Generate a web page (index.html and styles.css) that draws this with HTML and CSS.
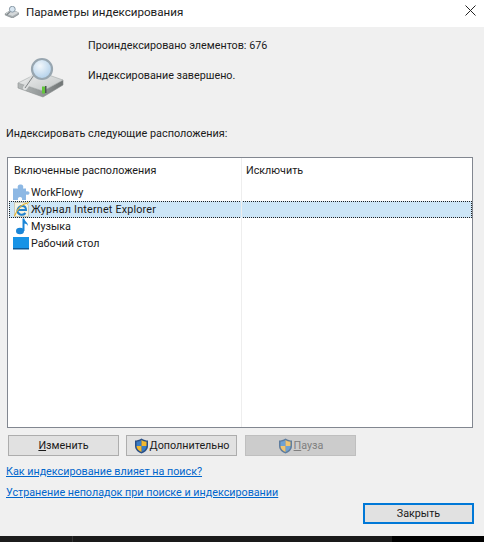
FILE: index.html
```html
<!DOCTYPE html>
<html lang="ru">
<head>
<meta charset="utf-8">
<title>Параметры индексирования</title>
<link rel="stylesheet" href="styles.css">
</head>
<body>
<div class="window">
  <header class="titlebar">
    <svg class="title-icon" width="16" height="12" viewBox="0 0 50 41">
      <path d="M2 26L24 13l23 10v6L27 41 2 31z" fill="#a9afb2" stroke="#6f777b" stroke-width="2"/>
      <path d="M2 26l25 8 20-11L24 13z" fill="#d4d8da"/>
      <path d="M19 19L7 30" stroke="#7b8286" stroke-width="4"/>
      <circle cx="26" cy="11" r="10" fill="#d8e6f1" stroke="#7f8f9c" stroke-width="3"/>
    </svg>
    <span class="title-text">Параметры индексирования</span>
    <svg class="close-icon" width="11" height="11" viewBox="0 0 11 11">
      <path d="M.5.5l10 10M10.500.5l-10 10" stroke="#222" stroke-width="1" fill="none"/>
    </svg>
  </header>
  <main class="content">
    <section class="status">
      <svg class="status-icon" width="50" height="41" viewBox="0 0 50 41">
        <defs>
          <linearGradient id="disk" x1="0" y1="0" x2="1" y2="1">
            <stop offset="0" stop-color="#f2f3f3"/><stop offset="1" stop-color="#bfc3c3"/>
          </linearGradient>
          <linearGradient id="side" x1="0" y1="0" x2="1" y2="0">
            <stop offset="0" stop-color="#b5b9b9"/><stop offset=".6" stop-color="#8d9292"/><stop offset="1" stop-color="#6f7474"/>
          </linearGradient>
          <radialGradient id="lens" cx=".4" cy=".35" r=".75">
            <stop offset="0" stop-color="#f2f7fb"/><stop offset="1" stop-color="#a9cbe8"/>
          </radialGradient>
        </defs>
        <path d="M2 26L27 34 47 23v5L27 40 2 31z" fill="url(#side)" stroke="#8a8f8f" stroke-width=".6"/>
        <path d="M2 26L24 15 47 23 27 34z" fill="url(#disk)" stroke="#a3a7a7" stroke-width=".6"/>
        <rect x="26" y="29.500" width="3" height="7" fill="#62c63a"/>
        <rect x="29" y="29" width="1.500" height="7" fill="#4b5254"/>
        <path d="M18 18L9 31" stroke="#dcdede" stroke-width="4.500" stroke-linecap="round"/>
        <path d="M18 18L9 31" stroke="#7f8485" stroke-width="1"/>
        <circle cx="26" cy="12" r="10" fill="url(#lens)" stroke="#98a6b0" stroke-width="2.200"/>
      </svg>
      <div class="status-lines">
        <p class="status-line">Проиндексировано элементов: 676</p>
        <p class="status-line">Индексирование завершено.</p>
      </div>
    </section>
    <h2 class="list-caption">Индексировать следующие расположения:</h2>
    <section class="list">
      <div class="list-head">
        <span class="col-included">Включенные расположения</span>
        <span class="col-excluded">Исключить</span>
      </div>
      <div class="row">
        <svg class="row-icon" width="17" height="17" viewBox="0 0 17 17">
          <path d="M5 4.500C4 2 5.500 .5 7.500 .5S11 2 10 4.500h3v3c2-.8 3.500 0 3.500 1.500S15 11.300 13 10.500V16H9c.6-2-.5-3-2-3s-2.500 1-2 3H0V4.500z" fill="#8db8e4"/>
        </svg>
        <span>WorkFlowy</span>
      </div>
      <div class="row row-selected">
        <svg class="row-icon" width="17" height="17" viewBox="0 0 17 17">
          <path d="M1.500 1.500h11l3 3v11h-14z" fill="#f5f3e2" stroke="#bdbca8" stroke-width=".7"/>
          <path d="M4.500 9h8.500C13 3.500 6 3.500 4.500 9c-.6 4.500 5 6.500 8 3" fill="none" stroke="#2483cc" stroke-width="2"/>
          <path d="M1.500 15C4.500 7 10 2.500 16 1.500" fill="none" stroke="#e6b531" stroke-width="1.200"/>
        </svg>
        <span class="row-text-wide">Журнал Internet Explorer</span>
      </div>
      <div class="row">
        <svg class="row-icon" width="17" height="17" viewBox="0 0 17 17">
          <ellipse cx="7" cy="13" rx="4" ry="3.200" fill="#1a86d8"/>
          <path d="M9.500 13V.5h1.800c.4 3 3.700 3.500 3.700 7.500-1-1.800-2.500-2.500-3.500-2.500V13z" fill="#1a86d8"/>
        </svg>
        <span>Музыка</span>
      </div>
      <div class="row">
        <svg class="row-icon" width="17" height="17" viewBox="0 0 17 17">
          <rect x="0" y="2" width="16" height="12" fill="#1793e6"/>
          <rect x="0" y="13" width="16" height="1.500" fill="#0e5a98"/>
        </svg>
        <span>Рабочий стол</span>
      </div>
      <div class="col-rule"></div>
    </section>
    <section class="actions">
      <button class="btn" type="button"><span><u>И</u>зменить</span></button>
      <button class="btn" type="button">
        <svg class="shield" width="15" height="16" viewBox="0 0 15 16">
          <path d="M7.500 0.500C5 2 3 2.500 1 2.500V8c0 4 3.500 6.500 6.500 7.500C10.500 14.500 14 12 14 8V2.500c-2 0-4-.5-6.500-2z" fill="#2a4f86"/>
          <path d="M7.500 2C6 3 4.500 3.500 2.500 3.800V8h5z" fill="#3a7cc4"/>
          <path d="M7.500 8v6c2.500-1 5-3 5-6z" fill="#3a7cc4"/>
          <path d="M7.500 2v6h5V3.800C10.500 3.500 9 3 7.500 2zM7.500 8h-5c0 3 2.500 5 5 6z" fill="#f3b82d"/>
        </svg>
        <span><u>Д</u>ополнительно</span>
      </button>
      <button class="btn btn-disabled" type="button" disabled>
        <svg class="shield" width="15" height="16" viewBox="0 0 15 16">
          <path d="M7.500 0.500C5 2 3 2.500 1 2.500V8c0 4 3.500 6.500 6.500 7.500C10.500 14.500 14 12 14 8V2.500c-2 0-4-.5-6.500-2z" fill="#5f7d9e"/>
          <path d="M7.500 2C6 3 4.500 3.500 2.500 3.800V8h5z" fill="#6ea2d4"/>
          <path d="M7.500 8v6c2.500-1 5-3 5-6z" fill="#6ea2d4"/>
          <path d="M7.500 2v6h5V3.800C10.500 3.500 9 3 7.500 2zM7.500 8h-5c0 3 2.500 5 5 6z" fill="#efc572"/>
        </svg>
        <span><u>П</u>ауза</span>
      </button>
    </section>
    <a class="link link-first" href="#">Как индексирование влияет на поиск?</a>
    <a class="link link-second" href="#">Устранение неполадок при поиске и индексировании</a>
    <footer class="footer">
      <button class="btn btn-default" type="button">Закрыть</button>
    </footer>
  </main>
  <div class="taskbar">
    <div class="task-left"></div>
    <div class="task-mid"></div>
    <div class="task-right"></div>
  </div>
</div>
</body>
</html>
```

FILE: styles.css
```css
* { box-sizing: border-box; }
html, body { margin: 0; padding: 0; }
body {
  width: 484px;
  height: 542px;
  overflow: hidden;
  font-family: Roboto, "Noto Sans", sans-serif;
  font-size: 10.75px;
  color: #1a1a1a;
  background: #f0f0f0;
}
.window { display: flex; flex-direction: column; height: 542px; }
.titlebar {
  height: 27px;
  background: #fff;
  display: flex;
  align-items: center;
  padding: 0 8px 3px 4px;
  flex: none;
}
.title-icon { margin-right: 6px; flex: none; }
.title-text { font-size: 11.6px; flex: 1; }
.close-icon { flex: none; margin-bottom: 3px; }
.content { flex: 1; display: flex; flex-direction: column; padding: 0 11px 0 7px; position: relative; }
.status { display: flex; height: 86px; padding: 11px 0 0 81px; position: relative; }
.status-icon { position: absolute; left: 9px; top: 30px; }
.status-lines { display: flex; flex-direction: column; gap: 14px; }
.status-line { margin: 0; line-height: 16px; }
.list-caption { margin: 13px 0 0 -1px; font-size: 10.85px; font-weight: 400; line-height: 16px; height: 31px; }
.list {
  width: 466px;
  height: 271px;
  background: #fff;
  border: 1px solid #828790;
  position: relative;
  padding-top: 2px;
}
.list-head { display: flex; height: 24px; padding: 3px 0 0 6px; line-height: 16px; }
.col-included { width: 232px; }
.col-rule { position: absolute; left: 233px; top: 0; bottom: 0; width: 1px; background: #eeeeee; }
.row { height: 17px; display: flex; align-items: center; padding-left: 4px; border: 1px solid transparent; }
.row-icon { flex: none; margin-right: 1px; }
.row-text-wide { letter-spacing: 0.2px; }
.row-selected { background: #cde6f7; border: 1px dotted #222; margin-left: 1px; padding-left: 3px; }
.actions { display: flex; margin: 7px 0 0 1px; gap: 7px; }
.btn {
  width: 111px;
  height: 21px;
  background: #e1e1e1;
  border: 1px solid #adadad;
  font: inherit;
  color: #1a1a1a;
  display: flex;
  align-items: center;
  justify-content: center;
  padding: 0;
}
.btn-disabled { background: #cccccc; border-color: #bfbfbf; color: #808080; margin-left: 1px; }
.shield { flex: none; margin-right: 1px; }
.link { color: #0066cc; text-decoration: underline; line-height: 16px; margin-left: -1px; width: max-content; }
.link-first { margin-top: 8px; }
.link-second { margin-top: 5px; }
.footer { position: absolute; right: 10px; top: 476px; }
.btn-default { border: 2px solid #0078d7; width: 111px; }
.taskbar { height: 6px; flex: none; display: flex; }
.task-left { width: 73px; background: #1c1c1c; border-right: 1px solid #333; }
.task-mid { width: 319px; background: #1a1a1a; }
.task-right { flex: 1; background: #000; }
```
